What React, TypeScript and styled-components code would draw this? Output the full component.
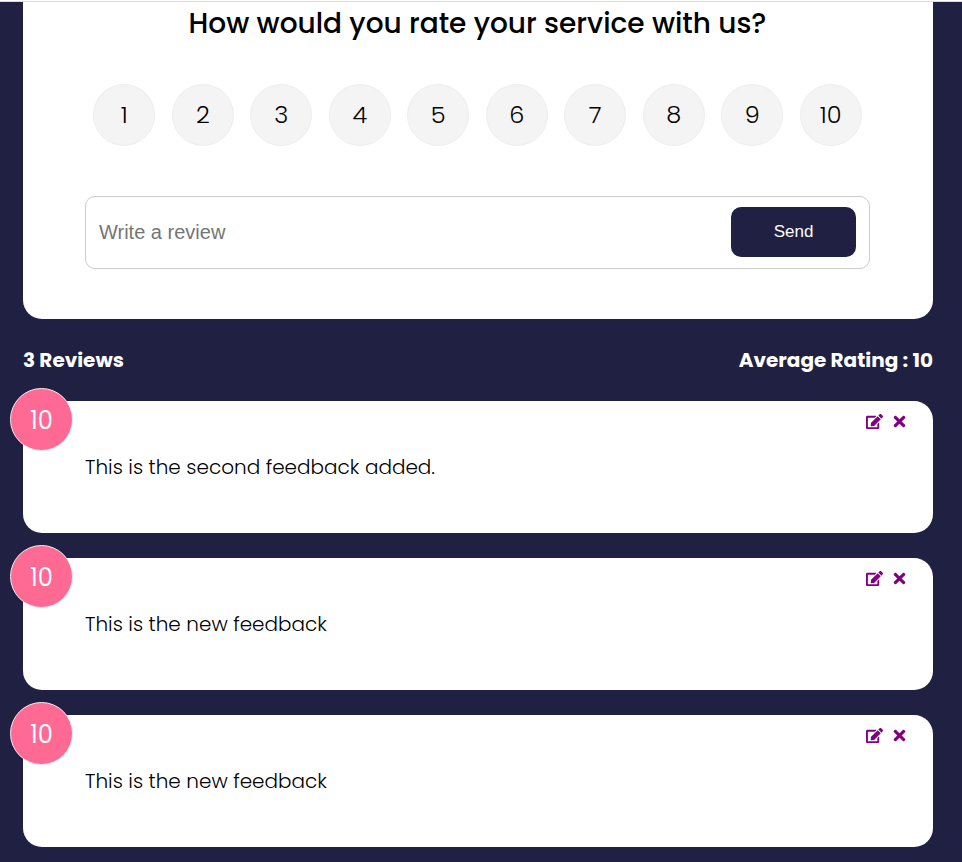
import React, { useState } from "react";
import styled, { createGlobalStyle } from "styled-components";
import { FaEdit, FaTimes } from "react-icons/fa";

const GlobalStyle = createGlobalStyle`
  *, *::before, *::after {
    box-sizing: border-box;
  }

  body {
    margin: 0;
    min-height: 100vh;
    background: #202142;
    font-family: Poppins, Inter, sans-serif;
    font-weight: 300;
    font-size: 20px;
    line-height: 32px;
    color: #000;
  }
`;

const TopBar = styled.header`
  height: 2px;
  background: #fff;
  border-bottom: 1px solid #dadcdc;
`;

const Page = styled.main`
  padding: 0 29px 15px 23px;
`;

const Panel = styled.section`
  padding: 0 63px 50px 62px;
  background: #fff;
  border-radius: 0 0 19px 19px;
`;

const Title = styled.h1`
  margin: 0;
  font-size: 28px;
  line-height: 44px;
  font-weight: 500;
  text-align: center;
`;

const Ratings = styled.fieldset`
  display: flex;
  justify-content: space-around;
  margin: 38px 0 50px;
  padding: 0;
  border: 0;
`;

const RatingOption = styled.label`
  position: relative;
  display: flex;
  align-items: center;
  justify-content: center;
  width: 62px;
  height: 62px;
  border: 1px solid #eee;
  border-radius: 50%;
  background: #f4f4f4;
  font-size: 24px;
  cursor: pointer;

  &:hover,
  &:has(input:checked) {
    background: #ff6a95;
    color: #fff;
  }
`;

const RatingInput = styled.input`
  position: absolute;
  inset: 0;
  width: 100%;
  height: 100%;
  margin: 0;
  opacity: 0;
  cursor: pointer;
`;

const ReviewBox = styled.div`
  display: flex;
  align-items: center;
  padding: 10px 13px 11px;
  border: 1px solid #ccc;
  border-radius: 10px;
`;

const ReviewInput = styled.input`
  flex: 1;
  min-width: 0;
  padding: 0;
  border: 0;
  outline: 0;
  background: transparent;
  font-family: "Liberation Sans", Arial, sans-serif;
  font-size: 20px;

  &::placeholder {
    color: #757575;
  }
`;

const SendButton = styled.button`
  width: 125px;
  height: 50px;
  border: 0;
  border-radius: 10px;
  background: #202142;
  color: #fff;
  font-family: "Liberation Sans", Arial, sans-serif;
  font-size: 17px;
  cursor: pointer;
`;

const Stats = styled.div`
  display: flex;
  justify-content: space-between;
  padding: 25px 0;
`;

const Stat = styled.h2`
  margin: 0;
  color: #fff;
  font-size: 20px;
  line-height: 32px;
  font-weight: 700;
`;

const ReviewList = styled.ul`
  display: grid;
  gap: 25px;
  margin: 0;
  padding: 0;
  list-style: none;
`;

const ReviewCard = styled.li`
  position: relative;
  padding: 50px 62px;
  border-radius: 19px;
  background: #fff;
`;

const Score = styled.div`
  position: absolute;
  top: -13px;
  left: -13px;
  width: 63px;
  height: 63px;
  border: 1px solid #eee;
  border-radius: 50%;
  background: #ff6a95;
  color: #fff;
  font-size: 24px;
  line-height: 63px;
  font-weight: 400;
  text-align: center;
`;

const Actions = styled.div`
  position: absolute;
  top: 12px;
  right: 25px;
  display: flex;
  gap: 8px;
`;

const IconButton = styled.button`
  display: flex;
  padding: 0;
  border: 0;
  background: none;
  color: purple;
  font-size: 17px;
  cursor: pointer;
`;

const ReviewText = styled.p`
  margin: 0;
`;

const scores = [1, 2, 3, 4, 5, 6, 7, 8, 9, 10];

const reviews = [
  { id: 1, rating: 10, text: "This is the second feedback added." },
  { id: 2, rating: 10, text: "This is the new feedback" },
  { id: 3, rating: 10, text: "This is the new feedback" },
];

export default function App() {
  const [rating, setRating] = useState<number | null>(null);
  const [text, setText] = useState("");

  return (
    <>
      <GlobalStyle />
      <TopBar />
      <Page>
        <Panel>
          <form onSubmit={(event) => event.preventDefault()}>
            <Title>How would you rate your service with us?</Title>
            <Ratings aria-label="Rating">
              {scores.map((score) => (
                <RatingOption key={score}>
                  <RatingInput
                    type="radio"
                    name="rating"
                    value={score}
                    checked={rating === score}
                    onChange={() => setRating(score)}
                  />
                  {score}
                </RatingOption>
              ))}
            </Ratings>
            <ReviewBox>
              <ReviewInput
                type="text"
                aria-label="Write a review"
                placeholder="Write a review"
                value={text}
                onChange={(event) => setText(event.target.value)}
              />
              <SendButton type="submit">Send</SendButton>
            </ReviewBox>
          </form>
        </Panel>
        <Stats>
          <Stat>3 Reviews</Stat>
          <Stat>Average Rating : 10</Stat>
        </Stats>
        <ReviewList>
          {reviews.map((review) => (
            <ReviewCard key={review.id}>
              <Score>{review.rating}</Score>
              <Actions>
                <IconButton type="button" aria-label="Edit review">
                  <FaEdit />
                </IconButton>
                <IconButton type="button" aria-label="Delete review">
                  <FaTimes />
                </IconButton>
              </Actions>
              <ReviewText>{review.text}</ReviewText>
            </ReviewCard>
          ))}
        </ReviewList>
      </Page>
    </>
  );
}
